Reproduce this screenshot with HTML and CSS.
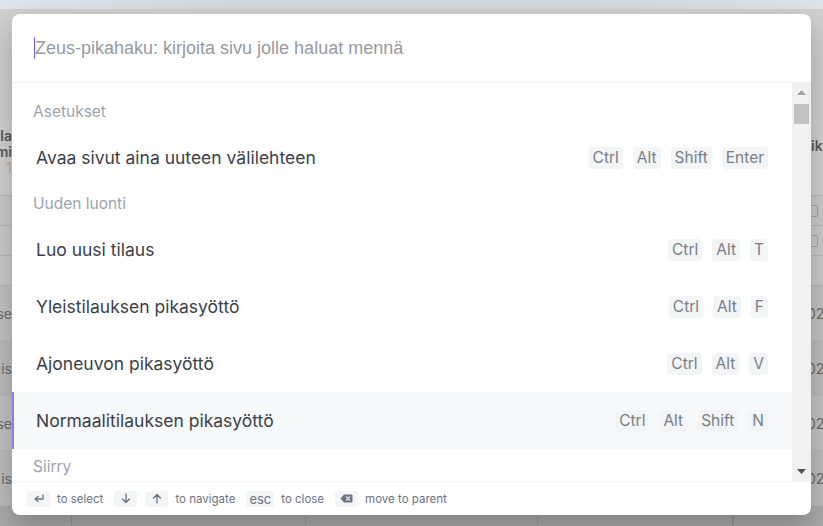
FILE: index.html
```html
<!DOCTYPE html>
<html lang="fi">
<head>
<meta charset="utf-8">
<title>Zeus-pikahaku</title>
<link rel="stylesheet" href="styles.css">
</head>
<body>
<div class="page">
  <div class="topbar"></div>
  <div class="toolbar"></div>
  <div class="trow thead">
    <div class="lcell"><span class="hd">Tila<br>Nimi<br><span class="orange">1</span></span></div>
    <div class="rcell"><span class="hd">ik</span></div>
  </div>
  <div class="trow filter"><div class="lcell"></div><div class="rcell"><span class="cal"></span></div></div>
  <div class="trow filter"><div class="lcell"></div><div class="rcell"><span class="cal"></span></div></div>
  <div class="trow filter"><div class="lcell"></div><div class="rcell"></div></div>
  <div class="trow data"><div class="lcell"><span>se</span></div><div class="rcell"><span>02</span></div></div>
  <div class="trow data alt"><div class="lcell"><span>is</span></div><div class="rcell"><span>02</span></div></div>
  <div class="trow data"><div class="lcell"><span>se</span></div><div class="rcell"><span>02</span></div></div>
  <div class="trow data alt"><div class="lcell"><span>is</span></div><div class="rcell"><span>02</span></div></div>
  <div class="trow bottom">
    <div class="bcell w1"></div><div class="bcell w2"></div><div class="bcell w3"></div><div class="bcell w4"></div><div class="bcell"></div>
  </div>
</div>

<div class="dialog">
  <div class="search"><span class="caret"></span><span class="placeholder">Zeus-pikahaku: kirjoita sivu jolle haluat mennä</span></div>
  <div class="body">
    <div class="list">
      <div class="group-title">Asetukset</div>
      <div class="item"><span>Avaa sivut aina uuteen välilehteen</span><span class="keys"><kbd>Ctrl</kbd><kbd>Alt</kbd><kbd>Shift</kbd><kbd>Enter</kbd></span></div>
      <div class="group-title">Uuden luonti</div>
      <div class="item"><span>Luo uusi tilaus</span><span class="keys"><kbd>Ctrl</kbd><kbd>Alt</kbd><kbd>T</kbd></span></div>
      <div class="item"><span>Yleistilauksen pikasyöttö</span><span class="keys"><kbd>Ctrl</kbd><kbd>Alt</kbd><kbd>F</kbd></span></div>
      <div class="item"><span>Ajoneuvon pikasyöttö</span><span class="keys"><kbd>Ctrl</kbd><kbd>Alt</kbd><kbd>V</kbd></span></div>
      <div class="item active"><span>Normaalitilauksen pikasyöttö</span><span class="keys"><kbd>Ctrl</kbd><kbd>Alt</kbd><kbd>Shift</kbd><kbd>N</kbd></span></div>
      <div class="group-title">Siirry</div>
    </div>
    <div class="scrollbar">
      <div class="sb-btn"><svg width="9" height="5" viewBox="0 0 9 5"><path d="M0 5 L4.5 0 L9 5 Z" fill="#a3a3a3"/></svg></div>
      <div class="sb-track"><div class="sb-thumb"></div></div>
      <div class="sb-btn"><svg width="9" height="5" viewBox="0 0 9 5"><path d="M0 0 L4.5 5 L9 0 Z" fill="#505050"/></svg></div>
    </div>
  </div>
  <div class="footer">
    <div class="hint">
      <span class="fk"><svg width="12" height="10" viewBox="0 0 12 10"><path d="M10 1 V5 H2.5 M5 2.5 L2.2 5 L5 7.5" fill="none" stroke="#6b7280" stroke-width="1.3" stroke-linecap="round" stroke-linejoin="round"/></svg></span>
      <span>to select</span>
    </div>
    <div class="hint">
      <span class="fk"><svg width="10" height="11" viewBox="0 0 10 11"><path d="M5 1 V9.5 M1.5 6 L5 9.5 L8.5 6" fill="none" stroke="#6b7280" stroke-width="1.3" stroke-linecap="round" stroke-linejoin="round"/></svg></span>
      <span class="fk"><svg width="10" height="11" viewBox="0 0 10 11"><path d="M5 10 V1.5 M1.5 5 L5 1.5 L8.5 5" fill="none" stroke="#6b7280" stroke-width="1.3" stroke-linecap="round" stroke-linejoin="round"/></svg></span>
      <span>to navigate</span>
    </div>
    <div class="hint">
      <span class="fk esc">esc</span>
      <span>to close</span>
    </div>
    <div class="hint">
      <span class="fk"><svg width="13" height="9" viewBox="0 0 13 9"><path d="M4 0.5 H11.5 A1 1 0 0 1 12.5 1.5 V7.5 A1 1 0 0 1 11.5 8.5 H4 L0.5 4.5 Z" fill="#6b7280"/><path d="M6.5 2.8 L9.7 6.2 M9.7 2.8 L6.5 6.2" stroke="#f3f4f6" stroke-width="1.2" stroke-linecap="round"/></svg></span>
      <span>move to parent</span>
    </div>
  </div>
</div>
</body>
</html>
```

FILE: styles.css
```css
* { box-sizing: border-box; }
html, body { margin: 0; padding: 0; }
body {
  width: 823px;
  height: 526px;
  overflow: hidden;
  position: relative;
  font-family: Inter, "Noto Sans", sans-serif;
  background: #c4c4c4;
}

/* background page (dimmed) */
.page { display: flex; flex-direction: column; width: 823px; }
.topbar { height: 9px; background: linear-gradient(90deg, #dfe5ec, #d2d8dd 30%, #d2d8dd 70%, #dde3e8); }
.toolbar { height: 111px; background: #d0d0d0; }
.trow { display: flex; justify-content: space-between; border-bottom: 1px solid #b9b9b9; }
.lcell, .rcell { width: 12px; overflow: hidden; display: flex; white-space: nowrap; font-size: 14px; color: #6e6e6e; }
.lcell { justify-content: flex-end; }
.rcell { justify-content: flex-start; }
.thead { height: 76px; background: #d2d2d2; }
.thead .lcell { align-items: flex-start; padding-top: 8px; }
.thead .rcell { align-items: flex-start; padding-top: 18px; }
.hd { font-weight: 600; color: #5a5a5a; line-height: 16px; text-align: right; }
.thead .rcell .hd { text-align: left; }
.orange { color: #d2ab8c; font-weight: 400; }
.filter { height: 30px; background: #cbcbcb; }
.filter .rcell { align-items: center; }
.cal { display: block; width: 10px; height: 12px; border: 1.5px solid #a5a5a5; border-radius: 2px; margin-left: -3px; }
.data { height: 55px; background: #c3c3c3; align-items: center; }
.data.alt { background: #bdbdbd; }
.data .rcell span { margin-left: -4px; }
.bottom { flex: 1; height: 40px; background: #ababab; border: none; justify-content: flex-start; }
.bcell { height: 40px; border-right: 1px solid #9a9a9a; }
.w1 { width: 72px; } .w2 { width: 234px; } .w3 { width: 232px; } .w4 { width: 195px; }

/* dialog */
.dialog {
  position: absolute;
  left: 12px;
  top: 14px;
  width: 799px;
  height: 501px;
  background: #fff;
  border-radius: 8px;
  overflow: hidden;
  display: flex;
  flex-direction: column;
  box-shadow: 0 12px 28px rgba(0,0,0,0.25);
}
.search {
  height: 69px;
  flex: none;
  border-bottom: 1px solid #f0f0f0;
  display: flex;
  align-items: center;
  padding-left: 22px;
}
.caret { width: 1px; height: 22px; background: #6d5ce8; }
.placeholder { font-family: "Liberation Sans", Arial, sans-serif; font-size: 18px; color: #979a9f; }

.body { flex: 1; display: flex; min-height: 0; }
.list { flex: 1; overflow: hidden; padding-top: 11px; }
.group-title {
  height: 35px;
  display: flex;
  align-items: center;
  padding-left: 21px;
  font-size: 15.5px;
  color: #9ca3af;
}
.item {
  height: 57px;
  display: flex;
  align-items: center;
  justify-content: space-between;
  padding: 0 24px 0 24px;
  font-size: 17.5px;
  color: #3b4048;
}
.item.active { background: #f7f8fa; border-left: 2px solid #8b7cf0; padding-left: 22px; }
.keys { display: flex; gap: 10px; }
kbd {
  font-family: Inter, "Noto Sans", sans-serif;
  font-size: 15.5px;
  height: 22px;
  line-height: 22px;
  padding: 0 4px;
  background: #f3f4f6;
  color: #787d86;
  border-radius: 4px;
}

.scrollbar { width: 19px; flex: none; background: #f1f1f1; display: flex; flex-direction: column; }
.sb-btn { height: 19px; display: flex; align-items: center; justify-content: center; flex: none; }
.sb-track { flex: 1; padding: 2px 2px 0 2px; }
.sb-thumb { height: 20px; background: #c1c1c1; }

.footer {
  height: 34px;
  flex: none;
  border-top: 1px solid #f0f0f0;
  display: flex;
  align-items: center;
  padding-left: 15px;
  gap: 11px;
  font-size: 11.5px;
  color: #6b7280;
}
.hint { display: flex; align-items: center; gap: 7px; }
.hint .fk + .fk { margin-left: 1px; }
.fk {
  height: 16px;
  min-width: 23px;
  padding: 0 3px;
  background: #f3f4f6;
  border-radius: 3px;
  display: flex;
  align-items: center;
  justify-content: center;
}
.fk.esc { font-size: 13px; min-width: 26px; line-height: 16px; color: #6b7280; }
```
